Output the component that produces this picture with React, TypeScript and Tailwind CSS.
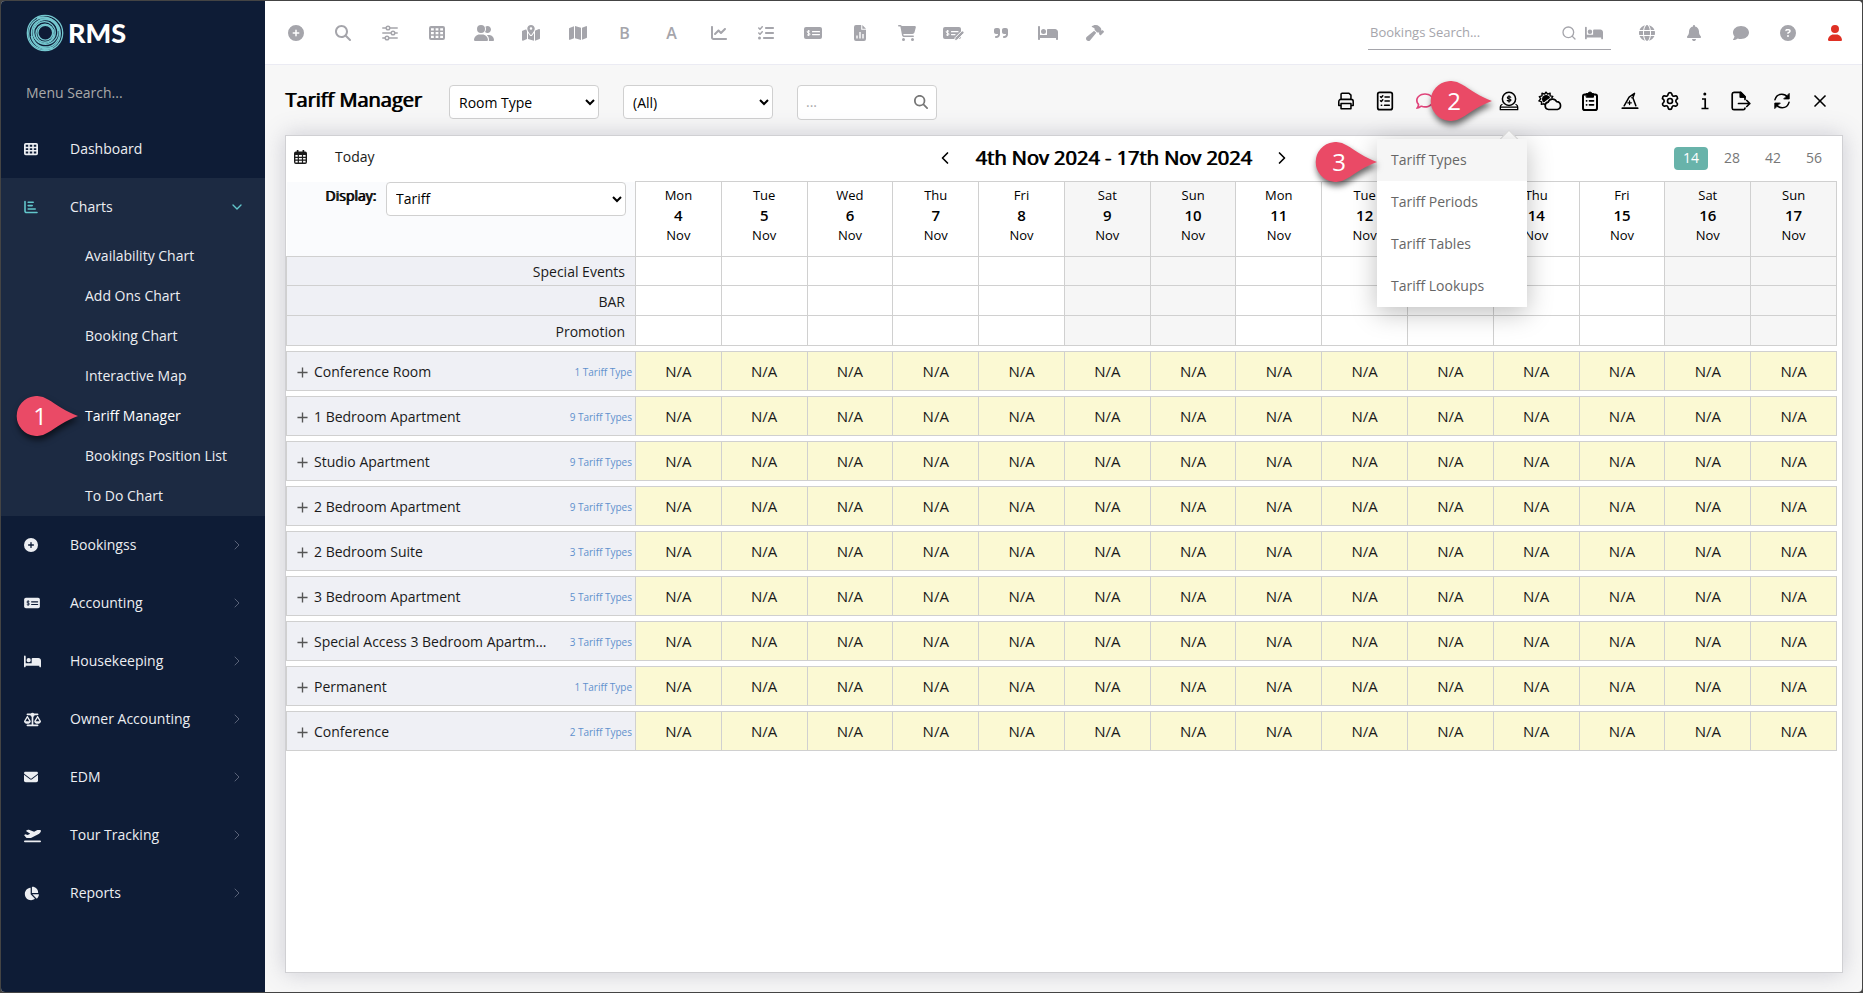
import { useState, type ReactNode } from "react";
import {
  FaArrowTrendUp,
  FaBed,
  FaBell,
  FaCartShopping,
  FaChartLine,
  FaChartPie,
  FaCircleQuestion,
  FaComment,
  FaCirclePlus,
  FaEnvelope,
  FaGlobe,
  FaHammer,
  FaListCheck,
  FaMagnifyingGlass,
  FaMap,
  FaMapLocationDot,
  FaPlaneDeparture,
  FaQuoteRight,
  FaRegComment,
  FaScaleBalanced,
  FaUser,
  FaUserGroup,
} from "react-icons/fa6";
import { ChevronDown, ChevronLeft, ChevronRight, Search, Settings, X } from "lucide-react";

function GridIcon({ className = "" }) {
  return (
    <svg viewBox="0 0 16 16" className={className} fill="currentColor" fillRule="evenodd">
      <path d="M2 1h12a2 2 0 0 1 2 2v10a2 2 0 0 1-2 2H2a2 2 0 0 1-2-2V3a2 2 0 0 1 2-2zM2 3.200v2.200h2.800V3.200zM6.600 3.200v2.200h2.800V3.200zM11.200 3.200v2.200h2.800V3.200zM2 7v2.200h2.800V7zM6.600 7v2.200h2.800V7zM11.200 7v2.200h2.800V7zM2 10.800V13h2.800v-2.200zM6.600 10.800V13h2.800v-2.200zM11.200 10.800V13h2.800v-2.200z" />
    </svg>
  );
}

function SlidersIcon({ className = "" }) {
  return (
    <svg viewBox="0 0 16 16" className={className} fill="none" stroke="currentColor" strokeWidth="1.500" strokeLinecap="round">
      <path d="M.8 3H4M8 3h7.200M.8 8H9M13 8h2.200M.8 13H3M7 13h8.200" />
      <circle cx="6" cy="3" r="1.800" />
      <circle cx="11" cy="8" r="1.800" />
      <circle cx="5" cy="13" r="1.800" />
    </svg>
  );
}

function MoneyIcon({ className = "" }) {
  return (
    <svg viewBox="0 0 18 16" className={className} fill="none">
      <rect x="0" y="2" width="18" height="12" rx="2" fill="currentColor" />
      <path d="M6 6.400C5.500 5.800 3.100 5.600 3.100 6.900c0 1.300 3 .9 3 2.200 0 1.400-2.500 1.200-3.100.5M4.600 5v6" stroke="#fff" strokeWidth="1" />
      <path d="M8.500 6.700H15.500M8.500 9.600H15.500" stroke="#fff" strokeWidth="1.200" strokeLinecap="round" />
    </svg>
  );
}

function MoneyPenIcon({ className = "" }) {
  return (
    <svg viewBox="0 0 21 16" className={className} fill="none">
      <rect x="0" y="2" width="18" height="12" rx="2" fill="currentColor" />
      <path d="M6 6.400C5.500 5.800 3.100 5.600 3.100 6.900c0 1.300 3 .9 3 2.200 0 1.400-2.500 1.200-3.100.5M4.600 5v6" stroke="#fff" strokeWidth="1" />
      <path d="M8.500 6.700H15M8.500 9.600H12" stroke="#fff" strokeWidth="1.200" strokeLinecap="round" />
      <path d="M11.500 16l.6-3.300 6.300-6.300a1.500 1.500 0 0 1 2.100 2.200l-6.300 6.400z" fill="currentColor" stroke="#fff" strokeWidth="1" />
    </svg>
  );
}

function FileChartIcon({ className = "" }) {
  return (
    <svg viewBox="0 0 12 16" className={className}>
      <path d="M2 0h5.200v4.800H12V14a2 2 0 0 1-2 2H2a2 2 0 0 1-2-2V2a2 2 0 0 1 2-2zM8.300 0L12 3.800H8.300z" fill="currentColor" />
      <path d="M3 10.500v3M6 7v6.500M9 9v4.500" stroke="#fff" strokeWidth="1.400" fill="none" />
    </svg>
  );
}

function LetterIcon({ children }: { children: ReactNode }) {
  return <span className="text-base leading-4 font-semibold">{children}</span>;
}

function BarsIcon({ className = "" }) {
  return (
    <svg viewBox="0 0 14 14" className={className} fill="none" stroke="currentColor" strokeWidth="1.600" strokeLinecap="round">
      <path d="M1 1.500V11a1.500 1.500 0 0 0 1.500 1.500H13M4.200 2.200h5M4.200 5.600h4M4.200 9h7" />
    </svg>
  );
}

function CalendarIcon({ className = "" }) {
  return (
    <svg viewBox="0 0 14 15" className={className} fill="currentColor" fillRule="evenodd">
      <path d="M3 0h1.800v1.600h4.400V0H11v1.600h1a2 2 0 0 1 2 2V13a2 2 0 0 1-2 2H2a2 2 0 0 1-2-2V3.600a2 2 0 0 1 2-2h1zM1.500 5.300v2h2.500v-2zM5.300 5.300v2h3.200v-2zM9.800 5.300v2h2.700v-2zM1.500 8.500v1.800h2.500V8.500zM5.300 8.500v1.800h3.200V8.500zM9.800 8.500v1.800h2.700V8.500zM1.500 11.500v2h2.500v-2zM5.300 11.500v2h3.200v-2zM9.800 11.500v2h2.700v-2z" />
    </svg>
  );
}

function Stroke({ children, className }: { children: ReactNode; className: string }) {
  return (
    <svg className={className} fill="none" stroke="currentColor" strokeWidth="1.700" strokeLinecap="round" strokeLinejoin="round" viewBox="0 0 20 20">
      {children}
    </svg>
  );
}

const PrintIcon = () => (
  <Stroke className="size-5">
    <path d="M4.500 8V2.500A1.200 1.200 0 0 1 5.700 1.300h7.600l2.200 2.200V8M4.500 15H2V10.500A2.300 2.300 0 0 1 4.300 8.200h11.400A2.300 2.300 0 0 1 18 10.500V15h-2.500M4.500 12.800h11v5.700h-11z" />
  </Stroke>
);

const ListIcon = () => (
  <Stroke className="size-5 shrink-0">
    <rect x="2.700" y="1.300" width="14.600" height="17.400" rx="2" />
    <path d="M5.500 5.700l.8.800 1.500-1.700M5.500 9.700l.8.800 1.500-1.700M6.300 14.200h.4M10 6h4.300M10 10h4.300M9.500 14.200h4.800" strokeWidth="1.500" />
  </Stroke>
);

const StampIcon = () => (
  <Stroke className="size-5">
    <circle cx="10" cy="7.900" r="6.600" strokeWidth="1.500" />
    <path d="M3 13.500C1.900 14 1.300 14.900 1.300 16v2.700h17.400V16c0-1.100-.6-2-1.700-2.500M1.500 16.200h17" strokeWidth="1.300" />
    <path d="M11.800 6.300c-.6-1-3.500-1-3.500.4 0 1.600 3.700.8 3.700 2.400 0 1.400-3.200 1.300-3.800.3M10 4.600v6.600" strokeWidth="1.100" />
  </Stroke>
);

const WeatherIcon = () => (
  <svg viewBox="0 0 24 20" className="h-5 w-6 shrink-0" fill="none" stroke="currentColor" strokeWidth="1.700" strokeLinejoin="round">
    <path d="M8 .8l1.500 2.300 2.600-1 0 2.800 2.700.5-1.300 2M8 .8L6.700 3.100 4 2.200l0 2.700-2.700.7 1.500 2.200L.9 9.900l2.700.9-.2 2.600 2.700-.6.500 1.300" strokeWidth="1.400" />
    <path d="M6.300 10.900a3.300 3.300 0 1 1 5-3.600" fill="currentColor" />
    <path d="M10.500 18.500a3.700 3.700 0 0 1-.4-7.300 4.600 4.600 0 0 1 8.500-.6 4 4 0 0 1 .8 7.900z" />
  </svg>
);

const ClipboardIcon = () => (
  <Stroke className="size-5 shrink-0">
    <rect x="3" y="3.500" width="14" height="15.500" rx="1.800" strokeWidth="2" />
    <path d="M6.500 2.600h1.400a2.200 2.200 0 0 1 4.200 0h1.400V6.200h-7z" fill="currentColor" strokeWidth="1" />
    <path d="M6.500 9.800h.2M6.500 13.800h.2M9.500 9.800h4M9.500 13.800h4" />
  </Stroke>
);

const HatIcon = () => (
  <Stroke className="size-5">
    <path d="M1.500 18h17" strokeWidth="2" />
    <path d="M3.500 15.300L9 5.600 15 1.500l-1.800 5 3.300 8.800" />
    <path d="M9.500 10v4M7.500 12h4M12 6.300l.3.300" strokeWidth="1.400" />
  </Stroke>
);

const InfoIcon = () => (
  <svg viewBox="0 0 8 20" className="h-5 w-2" fill="none" stroke="currentColor" strokeWidth="1.700">
    <circle cx="3.800" cy="3" r="1.500" fill="currentColor" stroke="none" />
    <path d="M1 8h3.200v9.300M.5 17.500h7" />
  </svg>
);

const ExportIcon = () => (
  <Stroke className="size-5">
    <path d="M14 8.500V5.500L9.800 1.300H3A1.800 1.800 0 0 0 1.200 3v14A1.800 1.800 0 0 0 3 18.700h9.200a1.800 1.800 0 0 0 1.800-1.600M9.500 1.500V6H14M7.500 12.500h11.300M15.800 9.500l3 3-3 3" />
    <path d="M9.500 1.500V6H14z" fill="currentColor" />
  </Stroke>
);

const RefreshIcon = () => (
  <Stroke className="size-5">
    <path d="M2.200 8.500C3.300 4.700 6.300 2.500 9.800 2.500c2.800 0 5 1.300 6.600 3.300M17.800 11.500c-1.100 3.800-4.100 6-7.600 6-2.800 0-5-1.300-6.600-3.300" />
    <path d="M18 2v5.700h-5.700zM2 18v-5.700h5.700z" fill="currentColor" strokeWidth="1" />
  </Stroke>
);

function Logo() {
  return (
    <svg viewBox="0 0 38 38" className="size-[38px]" fill="none" stroke="#74c7cf">
      <circle cx="19" cy="19" r="17.700" strokeWidth="1.300" />
      <circle cx="18.500" cy="19.500" r="15.800" strokeWidth="1.300" />
      <circle cx="19.500" cy="19" r="14" strokeWidth="1.400" />
      <circle cx="19.500" cy="18" r="12.400" strokeWidth="1.300" />
      <circle cx="18.500" cy="18.500" r="10.800" strokeWidth="1.300" />
      <circle cx="19" cy="19.300" r="9" strokeWidth="1.400" />
      <circle cx="19.300" cy="18.700" r="7.400" strokeWidth="1.400" />
      <path d="M11 4.500C20 1 31 6 32.500 17M27 33.500C18 37 8 32 5.500 22" strokeWidth="2.200" />
    </svg>
  );
}

function Callout({ label, className }: { label: string; className: string }) {
  return (
    <div className={`pointer-events-none absolute z-30 h-10 w-[62px] ${className}`}>
      <svg viewBox="0 0 62 40" className="absolute inset-0 size-full overflow-visible drop-shadow-[1px_4px_3px_rgba(0,0,0,0.6)]">
        <path d="M62 20C50 16 40 8 32 3.500A20 20 0 1 0 32 36.500C40 32 50 24 62 20z" fill="#ea4a66" />
      </svg>
      <span className="absolute inset-y-0 left-0 flex w-12 items-center justify-center text-2xl text-white">{label}</span>
    </div>
  );
}

const topIcons: { name: string; icon: ReactNode }[] = [
  { name: "Add", icon: <FaCirclePlus className="size-4" /> },
  { name: "Search", icon: <FaMagnifyingGlass className="size-4" /> },
  { name: "Filters", icon: <SlidersIcon className="size-4" /> },
  { name: "Dashboard", icon: <GridIcon className="size-4" /> },
  { name: "Guests", icon: <FaUserGroup className="size-5" /> },
  { name: "Map", icon: <FaMapLocationDot className="size-[18px]" /> },
  { name: "Site map", icon: <FaMap className="size-[18px]" /> },
  { name: "Bookings", icon: <LetterIcon>B</LetterIcon> },
  { name: "Availability", icon: <LetterIcon>A</LetterIcon> },
  { name: "Chart", icon: <FaChartLine className="size-4" /> },
  { name: "To do", icon: <FaListCheck className="size-4" /> },
  { name: "Accounts", icon: <MoneyIcon className="h-4 w-[18px]" /> },
  { name: "Report", icon: <FileChartIcon className="h-4 w-3" /> },
  { name: "Sales", icon: <FaCartShopping className="size-[18px]" /> },
  { name: "Quick charge", icon: <MoneyPenIcon className="h-4 w-[21px]" /> },
  { name: "Quote", icon: <FaQuoteRight className="size-4" /> },
  { name: "Rooms", icon: <FaBed className="size-5" /> },
  { name: "Maintenance", icon: <FaHammer className="size-[18px]" /> },
];

const chartItems = [
  "Availability Chart",
  "Add Ons Chart",
  "Booking Chart",
  "Interactive Map",
  "Tariff Manager",
  "Bookings Position List",
  "To Do Chart",
];

const menuItems: { name: string; icon: ReactNode }[] = [
  { name: "Bookingss", icon: <FaCirclePlus className="size-[14px]" /> },
  { name: "Accounting", icon: <MoneyIcon className="h-[14px] w-4 [&_path]:stroke-[#0e1c36]" /> },
  { name: "Housekeeping", icon: <FaBed className="size-[17px]" /> },
  { name: "Owner Accounting", icon: <FaScaleBalanced className="size-[17px]" /> },
  { name: "EDM", icon: <FaEnvelope className="size-[14px]" /> },
  { name: "Tour Tracking", icon: <FaPlaneDeparture className="size-[17px]" /> },
  { name: "Reports", icon: <FaChartPie className="size-[15px]" /> },
];

const days = ["Mon", "Tue", "Wed", "Thu", "Fri", "Sat", "Sun", "Mon", "Tue", "Wed", "Thu", "Fri", "Sat", "Sun"].map(
  (day, i) => ({ day, date: i + 4, weekend: day === "Sat" || day === "Sun" })
);

const summaryRows = ["Special Events", "BAR", "Promotion"];

const rooms: [string, string][] = [
  ["Conference Room", "1 Tariff Type"],
  ["1 Bedroom Apartment", "9 Tariff Types"],
  ["Studio Apartment", "9 Tariff Types"],
  ["2 Bedroom Apartment", "9 Tariff Types"],
  ["2 Bedroom Suite", "3 Tariff Types"],
  ["3 Bedroom Apartment", "5 Tariff Types"],
  ["Special Access 3 Bedroom Apartment", "3 Tariff Types"],
  ["Permanent", "1 Tariff Type"],
  ["Conference", "2 Tariff Types"],
];

function Sidebar() {
  return (
    <aside className="flex w-[264px] shrink-0 flex-col bg-[#0e1c36] text-sm text-[#eceef2]">
      <div className="flex h-16 items-center gap-1 pl-[25px]">
        <Logo />
        <span className="font-[Lato] text-[27px] leading-8 font-black text-white">RMS</span>
      </div>
      <div className="flex h-[55px] items-start pt-4 pl-[25px]">
        <input
          aria-label="Menu search"
          placeholder="Menu Search..."
          className="w-48 bg-transparent leading-6 outline-none placeholder:text-[#a9a9a9]"
        />
      </div>
      <nav>
        <a href="#dashboard" className="flex h-[58px] items-center pl-[23px]">
          <span className="w-[46px]"><GridIcon className="size-[14px]" /></span>
          Dashboard
        </a>
        <div className="bg-[#1c2a42]">
          <a href="#charts" className="flex h-[58px] items-center pr-5 pl-[23px]">
            <span className="w-[46px]"><BarsIcon className="size-[14px] text-[#62c6cb]" /></span>
            <span className="flex-1">Charts</span>
            <ChevronDown className="size-4 text-[#62c6cb]" />
          </a>
          <ul>
            {chartItems.map((item) => (
              <li key={item} className="relative">
                <a
                  href="#chart"
                  className={`flex h-10 items-center pl-[84px] ${item === "Tariff Manager" ? "text-white" : ""}`}
                >
                  {item}
                </a>
                {item === "Tariff Manager" && <Callout label="1" className="top-0 left-[15px]" />}
              </li>
            ))}
          </ul>
        </div>
        {menuItems.map((item) => (
          <a key={item.name} href="#menu" className="flex h-[58px] items-center pr-5 pl-[23px]">
            <span className="w-[46px]">{item.icon}</span>
            <span className="flex-1">{item.name}</span>
            <ChevronRight className="size-4 text-[#596278]" strokeWidth={1.5} />
          </a>
        ))}
      </nav>
    </aside>
  );
}

function TopBar() {
  return (
    <header className="flex h-16 items-center justify-between border-b border-[#ebebf3] bg-white pt-px pr-1 pl-[7px] text-[#a5a5ab]">
      <div className="flex">
        {topIcons.map(({ name, icon }) => (
          <button key={name} aria-label={name} className="flex h-8 w-[47px] items-center justify-center">
            {icon}
          </button>
        ))}
      </div>
      <div className="flex items-center">
        <div className="mr-3 flex h-[34px] w-[243px] items-center gap-2 border-b border-[#a5a5ab] pr-2 pl-[2px]">
          <input
            aria-label="Bookings search"
            placeholder="Bookings Search..."
            className="min-w-0 flex-1 text-[13px] outline-none placeholder:text-[#a5a5ab]"
          />
          <Search className="size-4" />
          <FaBed className="size-[18px]" />
        </div>
        <button aria-label="Language" className="flex w-[47px] justify-center"><FaGlobe className="size-4" /></button>
        <button aria-label="Notifications" className="flex w-[47px] justify-center"><FaBell className="size-4" /></button>
        <button aria-label="Messages" className="flex w-[47px] justify-center"><FaComment className="size-4" /></button>
        <button aria-label="Help" className="flex w-[47px] justify-center"><FaCircleQuestion className="size-4" /></button>
        <button aria-label="Account" className="flex w-[47px] justify-center text-[#df3024]"><FaUser className="size-4" /></button>
      </div>
    </header>
  );
}

function TariffMenu() {
  return (
    <div className="absolute top-12 right-[-8px] z-20 w-[150px]">
      <div className="absolute -top-[6px] right-[10px] size-4 rotate-45 border border-[#ddd] bg-white" />
      <ul className="relative bg-white text-sm text-[#666] shadow-[0_6px_24px_rgba(0,0,0,0.25)]">
        {["Tariff Types", "Tariff Periods", "Tariff Tables", "Tariff Lookups"].map((item, i) => (
          <li key={item}>
            <button className={`flex h-[42px] w-full items-center pl-[14px] ${i === 0 ? "bg-[#f6f6f6]" : ""}`}>{item}</button>
          </li>
        ))}
      </ul>
      <Callout label="3" className="top-[3px] right-[150px]" />
    </div>
  );
}

function Toolbar() {
  return (
    <div className="flex items-center gap-[22px] pr-4 pb-0.5 text-black">
      <button aria-label="Print" className="flex w-[18px] justify-center"><PrintIcon /></button>
      <button aria-label="List" className="flex w-4 justify-center"><ListIcon /></button>
      <button aria-label="Comments" className="flex w-5 justify-center text-[#e0457b]"><FaRegComment className="size-[18px]" /></button>
      <button aria-label="Trends" className="flex w-5 justify-center"><FaArrowTrendUp className="size-[14px]" /></button>
      <div className="relative flex w-5 justify-center">
        <button aria-label="Tariffs"><StampIcon /></button>
        <Callout label="2" className="top-[-10px] right-[27px]" />
        <TariffMenu />
      </div>
      <button aria-label="Seasons" className="flex w-[18px] justify-center"><WeatherIcon /></button>
      <button aria-label="Clipboard" className="flex w-[18px] justify-center"><ClipboardIcon /></button>
      <button aria-label="Wizard" className="flex w-[18px] justify-center"><HatIcon /></button>
      <button aria-label="Settings" className="flex w-[18px] justify-center"><Settings className="size-5 shrink-0" /></button>
      <button aria-label="Information"><InfoIcon /></button>
      <button aria-label="Export"><ExportIcon /></button>
      <button aria-label="Refresh" className="flex w-[18px] justify-center"><RefreshIcon /></button>
      <button aria-label="Close" className="flex w-[14px] justify-center"><X className="size-5 shrink-0" /></button>
    </div>
  );
}

function TariffTable() {
  const [display, setDisplay] = useState("Tariff");

  return (
    <table className="w-full table-fixed border-collapse text-sm text-[#1a1a1a]">
      <colgroup>
        <col className="w-[349px]" />
        {days.map((d) => (
          <col key={d.date} />
        ))}
      </colgroup>
      <thead>
        <tr className="h-[75px]">
          <td className="bg-[#fafbfd] p-0 align-top">
            <div className="flex justify-end gap-[10px] pr-[9px]">
              <label htmlFor="display" className="pt-0.5 text-sm leading-6 text-black [text-shadow:1px_0_0_currentColor]">Display:</label>
              <select
                id="display"
                value={display}
                onChange={(e) => setDisplay(e.target.value)}
                className="h-[34px] w-60 rounded border border-[#d0d0d0] bg-white pl-[5px] text-black"
              >
                <option>Tariff</option>
              </select>
            </div>
          </td>
          {days.map((d) => (
            <th
              key={d.date}
              scope="col"
              className={`border border-[#d0d0d0] p-0 pb-2 text-[13px] leading-5 font-normal text-black ${d.weekend ? "bg-[#f6f6f6]" : "bg-white"}`}
            >
              {d.day}
              <div className="text-[15px] font-semibold">{d.date}</div>
              Nov
            </th>
          ))}
        </tr>
      </thead>
      <tbody>
        {summaryRows.map((name, i) => (
          <tr key={name} className={i === 0 ? "h-[29px]" : "h-[30px]"}>
            <th scope="row" className="border border-[#d0d0d0] bg-[#eff0f5] p-0 pt-0.5 pr-[10px] text-right font-normal">{name}</th>
            {days.map((d) => (
              <td key={d.date} className={`border border-[#d0d0d0] ${d.weekend ? "bg-[#f6f6f6]" : ""}`} />
            ))}
          </tr>
        ))}
      </tbody>
      {rooms.map(([name, types]) => (
        <tbody key={name}>
          <tr className="h-[6px]">
            <td colSpan={15} className="p-0" />
          </tr>
          <tr className="h-[39px]">
            <th scope="row" className="border border-[#d0d0d0] bg-[#eff0f5] p-0 pt-0.5 font-normal">
              <div className="flex items-center justify-between pr-[3px] pl-[10px]">
                <button className="flex items-center gap-[6px]">
                  <svg viewBox="0 0 12 12" className="size-[11px] shrink-0" stroke="#555" strokeWidth="1.500"><path d="M.5 6h11M6 .5v11" /></svg>
                  <span className="max-w-[238px] truncate">{name}</span>
                </button>
                <span className="text-[10px] text-[#5f90cd]">{types}</span>
              </div>
            </th>
            {days.map((d) => (
              <td key={d.date} className="border border-[#d0d0d0] bg-[#fbf9d3] p-0 pt-0.5 text-center text-[15px]">N/A</td>
            ))}
          </tr>
        </tbody>
      ))}
    </table>
  );
}

export default function App() {
  const [range, setRange] = useState(14);

  return (
    <div className="min-h-screen bg-[#444] p-px font-['Open_Sans','Noto_Sans',sans-serif]">
      <div className="flex min-h-[calc(100vh-2px)] overflow-hidden rounded bg-[#f7f7f7]">
        <Sidebar />
        <div className="flex min-w-0 flex-1 flex-col">
          <TopBar />
          <main className="flex flex-1 flex-col pr-[19px] pb-[19px] pl-5">
            <div className="flex h-[70px] items-center justify-between pt-1">
              <div className="flex items-center">
                <h1 className="w-[164px] pb-1 text-xl text-black [text-shadow:1px_0_0_currentColor]">Tariff Manager</h1>
                <select aria-label="View by" className="mr-6 h-[34px] w-[150px] rounded border border-[#d0d0d0] bg-white pl-[5px] text-sm text-black">
                  <option>Room Type</option>
                </select>
                <select aria-label="Filter" className="mr-6 h-[34px] w-[150px] rounded border border-[#d0d0d0] bg-white pl-[5px] text-sm text-black">
                  <option>(All)</option>
                </select>
                <div className="flex h-[35px] w-[140px] items-center rounded border border-[#d0d0d0] bg-white px-2 text-sm">
                  <input aria-label="Search tariffs" placeholder="..." className="min-w-0 flex-1 outline-none placeholder:text-[#aaa]" />
                  <FaMagnifyingGlass className="size-[14px] text-[#777]" />
                </div>
              </div>
              <Toolbar />
            </div>
            <section className="flex-1 border border-[#d0d0d3] bg-white pr-[5px] shadow-[0_0_22px_rgba(90,90,120,0.28)]">
              <div className="grid h-[45px] grid-cols-[350px_1fr_246px] items-center">
                <div className="flex items-center pb-[3px] pl-2 text-sm text-[#1a1a1a]">
                  <CalendarIcon className="h-[14px] w-[13px]" />
                  <button className="ml-7">Today</button>
                </div>
                <div className="flex items-center justify-center gap-5 pb-px text-black">
                  <button aria-label="Previous"><ChevronLeft className="size-5" /></button>
                  <h2 className="text-xl [text-shadow:1px_0_0_currentColor]">4th Nov 2024 - 17th Nov 2024</h2>
                  <button aria-label="Next"><ChevronRight className="size-5" /></button>
                </div>
                <div className="flex justify-end gap-[7px] pr-[6px] pb-px text-sm">
                  {[14, 28, 42, 56].map((n) => (
                    <button
                      key={n}
                      onClick={() => setRange(n)}
                      className={`h-[23px] w-[34px] rounded leading-5 ${n === range ? "bg-[#68b3aa] text-white" : "text-[#777]"}`}
                    >
                      {n}
                    </button>
                  ))}
                </div>
              </div>
              <TariffTable />
            </section>
          </main>
        </div>
      </div>
    </div>
  );
}
